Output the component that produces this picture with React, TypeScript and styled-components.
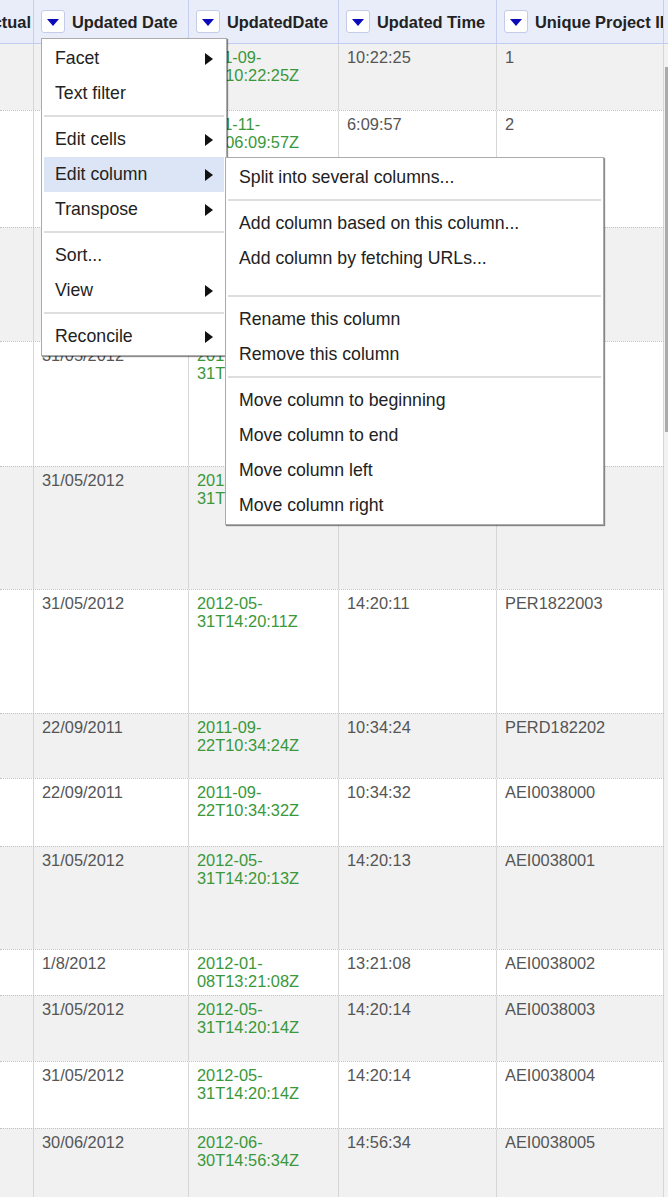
import React from "react";
import styled, { createGlobalStyle } from "styled-components";

const GlobalStyle = createGlobalStyle`
  html, body {
    margin: 0;
    padding: 0;
    background: #fff;
  }
  body {
    font-family: "Liberation Sans", Arial, sans-serif;
  }
`;

const COLS = "34px 155px 150px 158px 167px";

type DataRow = {
  h: number;
  date: string;
  iso: [string, string];
  time: string;
  id: string;
};

const rows: DataRow[] = [
  { h: 66, date: "22/09/2011", iso: ["2011-09-", "22T10:22:25Z"], time: "10:22:25", id: "1" },
  { h: 117, date: "24/11/2011", iso: ["2011-11-", "24T06:09:57Z"], time: "6:09:57", id: "2" },
  { h: 114, date: "31/05/2012", iso: ["2012-05-", "31T14:20:09Z"], time: "14:20:09", id: "3" },
  { h: 125, date: "31/05/2012", iso: ["2012-05-", "31T14:20:10Z"], time: "14:20:10", id: "4" },
  { h: 123, date: "31/05/2012", iso: ["2012-05-", "31T14:20:10Z"], time: "14:20:10", id: "5" },
  { h: 124, date: "31/05/2012", iso: ["2012-05-", "31T14:20:11Z"], time: "14:20:11", id: "PER1822003" },
  { h: 65, date: "22/09/2011", iso: ["2011-09-", "22T10:34:24Z"], time: "10:34:24", id: "PERD182202" },
  { h: 68, date: "22/09/2011", iso: ["2011-09-", "22T10:34:32Z"], time: "10:34:32", id: "AEI0038000" },
  { h: 103, date: "31/05/2012", iso: ["2012-05-", "31T14:20:13Z"], time: "14:20:13", id: "AEI0038001" },
  { h: 46, date: "1/8/2012", iso: ["2012-01-", "08T13:21:08Z"], time: "13:21:08", id: "AEI0038002" },
  { h: 66, date: "31/05/2012", iso: ["2012-05-", "31T14:20:14Z"], time: "14:20:14", id: "AEI0038003" },
  { h: 67, date: "31/05/2012", iso: ["2012-05-", "31T14:20:14Z"], time: "14:20:14", id: "AEI0038004" },
  { h: 80, date: "30/06/2012", iso: ["2012-06-", "30T14:56:34Z"], time: "14:56:34", id: "AEI0038005" },
];

const Page = styled.div`
  width: 668px;
  height: 1197px;
  overflow: hidden;
  position: relative;
`;

const Header = styled.div`
  display: grid;
  grid-template-columns: ${COLS} 4px;
  height: 44px;
  box-sizing: border-box;
  background: #e8edf9;
  border-bottom: 1px solid #c2cbf0;
`;

// $clipStart: the column is scrolled off to the left, so only the end of its label shows
// $anchor: holds the open column menu, so it must not clip
const HeaderCell = styled.div<{ $clipStart?: boolean; $anchor?: boolean }>`
  position: relative;
  display: flex;
  align-items: center;
  justify-content: ${(p) => (p.$clipStart ? "flex-end" : "flex-start")};
  padding: ${(p) => (p.$clipStart ? "0 2px 0 0" : "0 0 0 7px")};
  border-right: 1px solid #c6cff0;
  font-size: 16.4px;
  font-weight: bold;
  color: #222;
  white-space: nowrap;
  overflow: ${(p) => (p.$anchor ? "visible" : "hidden")};
`;

const HeaderLabel = styled.span`
  flex-shrink: 0;
  padding-top: 1px;
`;

const DropButton = styled.span`
  flex-shrink: 0;
  width: 24px;
  height: 23px;
  box-sizing: border-box;
  margin-right: 7px;
  border: 1px solid #c5cce8;
  border-radius: 3px;
  background: #fff;
  display: flex;
  align-items: center;
  justify-content: center;

  &::after {
    content: "";
    border-left: 6px solid transparent;
    border-right: 6px solid transparent;
    border-top: 7px solid #0b0bb8;
    margin-top: 1px;
  }
`;

const Body = styled.div`
  display: flex;
`;

const Rows = styled.div`
  width: 664px;
`;

const Row = styled.div<{ $h: number; $alt: boolean; $first: boolean }>`
  display: grid;
  grid-template-columns: ${COLS};
  height: ${(p) => p.$h}px;
  box-sizing: border-box;
  background: ${(p) => (p.$alt ? "#f1f1f1" : "#fff")};
  border-top: ${(p) => (p.$first ? "none" : "1px dotted #c2c2c2")};
`;

const Cell = styled.div<{ $kind?: "text" | "date" }>`
  padding: ${(p) => (p.$kind ? "4px 8px 0 8px" : "0")};
  border-right: 1px solid #d6d6d6;
  font-size: 16.4px;
  line-height: 18.4px;
  color: ${(p) => (p.$kind === "date" ? "#3a983a" : "#555")};
  overflow: hidden;
  white-space: nowrap;
`;

const ScrollTrack = styled.div`
  width: 4px;
  background: #f2f2f2;
`;

const ScrollThumb = styled.div`
  width: 3px;
  height: 365px;
  margin: 23px 0 0 1px;
  background: #ababab;
`;

const Menu = styled.div<{ $width: number; $left: string; $top: string }>`
  position: absolute;
  left: ${(p) => p.$left};
  top: ${(p) => p.$top};
  width: ${(p) => p.$width}px;
  box-sizing: border-box;
  padding: 2px 2px 1px;
  background: #fff;
  border: 1px solid #ababab;
  box-shadow: 1px 1px 1px rgba(0, 0, 0, 0.45);
  z-index: 10;
  font-size: 17.7px;
  font-weight: normal;
  color: #222;
  white-space: nowrap;
`;

const MenuItem = styled.div<{ $active?: boolean }>`
  position: relative;
  height: 35px;
  display: flex;
  align-items: center;
  justify-content: space-between;
  padding: 0 11px;
  background: ${(p) => (p.$active ? "#dce5f5" : "transparent")};
`;

const SubArrow = styled.span`
  width: 0;
  height: 0;
  border-left: 8px solid #111;
  border-top: 6px solid transparent;
  border-bottom: 6px solid transparent;
`;

const MenuSeparator = styled.div`
  height: 2px;
  margin: 4px 0 5px;
  background: #dedede;
`;

const MenuGap = styled.div`
  height: 15px;
`;

const Item = ({ label, sub, active, children }: { label: string; sub?: boolean; active?: boolean; children?: React.ReactNode }) => (
  <MenuItem $active={active}>
    <span>{label}</span>
    {sub && <SubArrow />}
    {children}
  </MenuItem>
);

const ColumnMenu = () => (
  <Menu $width={186} $left="7px" $top="38px">
    <Item label="Facet" sub />
    <Item label="Text filter" />
    <MenuSeparator />
    <Item label="Edit cells" sub />
    <Item label="Edit column" sub active>
      <Menu $width={379} $left="calc(100% + 1px)" $top="0">
        <Item label="Split into several columns..." />
        <MenuSeparator />
        <Item label="Add column based on this column..." />
        <Item label="Add column by fetching URLs..." />
        <MenuGap />
        <MenuSeparator />
        <Item label="Rename this column" />
        <Item label="Remove this column" />
        <MenuSeparator />
        <Item label="Move column to beginning" />
        <Item label="Move column to end" />
        <Item label="Move column left" />
        <Item label="Move column right" />
      </Menu>
    </Item>
    <Item label="Transpose" sub />
    <MenuSeparator />
    <Item label="Sort..." />
    <Item label="View" sub />
    <MenuSeparator />
    <Item label="Reconcile" sub />
  </Menu>
);

export default function App() {
  return (
    <>
      <GlobalStyle />
      <Page>
        <Header>
          <HeaderCell $clipStart>
            <HeaderLabel>Actual</HeaderLabel>
          </HeaderCell>
          <HeaderCell $anchor>
            <DropButton />
            <HeaderLabel>Updated Date</HeaderLabel>
            <ColumnMenu />
          </HeaderCell>
          <HeaderCell>
            <DropButton />
            <HeaderLabel>UpdatedDate</HeaderLabel>
          </HeaderCell>
          <HeaderCell>
            <DropButton />
            <HeaderLabel>Updated Time</HeaderLabel>
          </HeaderCell>
          <HeaderCell>
            <DropButton />
            <HeaderLabel>Unique Project ID</HeaderLabel>
          </HeaderCell>
          <div />
        </Header>
        <Body>
          <Rows>
            {rows.map((r, i) => (
              <Row key={i} $h={r.h} $alt={i % 2 === 0} $first={i === 0}>
                <Cell />
                <Cell $kind="text">{r.date}</Cell>
                <Cell $kind="date">
                  {r.iso[0]}
                  <br />
                  {r.iso[1]}
                </Cell>
                <Cell $kind="text">{r.time}</Cell>
                <Cell $kind="text">{r.id}</Cell>
              </Row>
            ))}
          </Rows>
          <ScrollTrack>
            <ScrollThumb />
          </ScrollTrack>
        </Body>
      </Page>
    </>
  );
}
